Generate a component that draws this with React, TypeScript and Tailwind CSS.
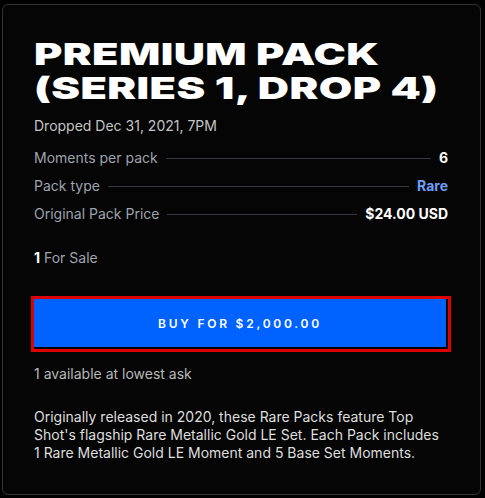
const rows = [
  { label: 'Moments per pack', value: '6', tone: 'text-white' },
  { label: 'Pack type', value: 'Rare', tone: 'text-[#6e9df5]' },
  { label: 'Original Pack Price', value: '$24.00 USD', tone: 'text-white' },
];

export default function App() {
  return (
    <div className="min-h-screen bg-black pl-[2px] pt-[4px] font-['Inter','Liberation_Sans',sans-serif]">
      <div className="w-[479px] h-[491px] rounded-md border border-[#333] bg-[#050505] pl-[31px] pr-[32px] pt-[32px]">
        <h1 className="w-fit origin-left scale-x-[1.44] text-[30px] leading-[34px] font-black tracking-[0.01em] text-white whitespace-nowrap">
          PREMIUM PACK
          <br />
          (SERIES 1, DROP 4)
        </h1>

        <p className="mt-[11px] text-sm leading-5 text-[#c4c4c4]">Dropped Dec 31, 2021, 7PM</p>

        <div className="mt-3 flex flex-col gap-2">
          {rows.map((r) => (
            <div key={r.label} className="flex items-center gap-2 text-sm leading-5">
              <span className="text-[#9ea3ad]">{r.label}</span>
              <div className="h-px flex-1 bg-[#353840]" />
              <span className={`font-bold ${r.tone}`}>{r.value}</span>
            </div>
          ))}
        </div>

        <p className="mt-6 text-sm leading-5 text-[#9ea3ad]">
          <span className="font-bold text-white">1</span> For Sale
        </p>

        <button className="mt-[31px] h-[50px] w-[414px] border-r-2 border-b-2 border-black bg-[#0062ff] pt-[2px] text-xs font-semibold tracking-[0.23em] text-white outline-[3px] outline-[#e00000] outline-solid">
          BUY FOR $2,000.00
        </button>

        <p className="mt-[15px] text-sm leading-5 text-[#b8b8b8]">1 available at lowest ask</p>

        <p className="mt-6 text-sm leading-[18px] text-[#dedede]">
          Originally released in 2020, these Rare Packs feature Top Shot's flagship Rare Metallic Gold LE Set. Each Pack includes 1 Rare Metallic Gold LE Moment and 5 Base Set Moments.
        </p>
      </div>
    </div>
  );
}
